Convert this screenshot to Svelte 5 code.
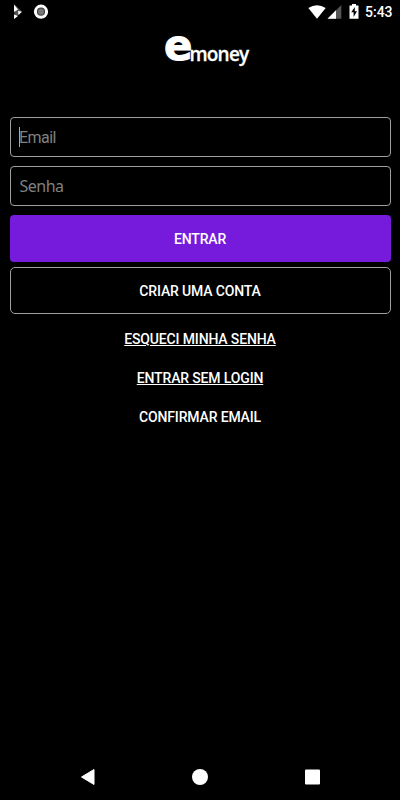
<script>
	let email = $state("");
	let senha = $state("");
	const links = [
		{ label: "ESQUECI MINHA SENHA", underline: true },
		{ label: "ENTRAR SEM LOGIN", underline: true },
		{ label: "CONFIRMAR EMAIL", underline: false }
	];
</script>

<div class="screen">
	<header class="status">
		<svg class="notify" width="36" height="16" viewBox="0 0 36 16">
			<path d="M1.5 0.5L8.8 7.6L1.5 14.8Z" fill="#555" />
			<path d="M1 0.5L5 5.5L1 8ZM5 7L9 7.7L5.5 11ZM1 10.5L5 12L1 15Z" fill="#fff" />
			<circle cx="28" cy="7.7" r="5.6" fill="#444" stroke="#fff" stroke-width="3" />
			<circle cx="28" cy="7.7" r="3" fill="#777" />
		</svg>
		<div class="system">
			<svg width="52" height="18" viewBox="0 0 52 18">
				<path d="M0.3 5.1Q9 -0.7 17.7 5.1L9 15.8Z" fill="#fff" />
				<path d="M19.5 15.8L33.3 2V15.8Z" fill="#555" />
				<path d="M19.5 15.8L28 7.2V15.8Z" fill="#fff" />
				<path d="M41.5 2.5H44V1H48V2.5H50.5V15.7H41.5Z" fill="#fff" />
				<path d="M46.8 4L43.2 9.3H45.6V14L49 8.2H46.8Z" fill="#000" />
			</svg>
			<span class="clock">5:43</span>
		</div>
	</header>

	<div class="logo">
		<svg width="88" height="36" viewBox="0 0 88 36">
			<text class="mark" x="-1" y="28">e</text>
			<text class="word" x="24.5" y="29">money</text>
		</svg>
	</div>

	<main>
		<div class="field">
			<span class="caret"></span>
			<input class="email" type="text" placeholder="Email" bind:value={email} />
		</div>
		<div class="field">
			<input class="senha" type="password" placeholder="Senha" bind:value={senha} />
		</div>
		<button class="primary">ENTRAR</button>
		<button class="outline">CRIAR UMA CONTA</button>
		<nav>
			{#each links as link}
				<button class="link"><span class:underline={link.underline}>{link.label}</span></button>
			{/each}
		</nav>
	</main>

	<footer>
		<svg width="16" height="18" viewBox="0 0 16 18">
			<path d="M14 1.5V16.5L1.5 9Z" fill="#fff" stroke="#fff" stroke-linejoin="round" />
		</svg>
		<svg width="16" height="18" viewBox="0 0 16 18">
			<circle cx="8" cy="9" r="8" fill="#fff" />
		</svg>
		<svg width="16" height="18" viewBox="0 0 16 18">
			<rect x="1" y="1.5" width="15" height="15" rx="1" fill="#fff" />
		</svg>
	</footer>
</div>

<style>
	:global(body) {
		margin: 0;
		background: #000;
	}
	.screen {
		height: 800px;
		display: flex;
		flex-direction: column;
		background: #000;
		color: #fff;
		font-family: Roboto, sans-serif;
	}
	svg {
		display: block;
	}
	.status {
		height: 24px;
		display: flex;
		justify-content: space-between;
		box-sizing: border-box;
		padding: 3px 8px 0 13px;
	}
	.notify {
		margin-top: 1px;
	}
	.system {
		display: flex;
		gap: 5px;
	}
	.clock {
		width: 27px;
		font-size: 14px;
		font-weight: 500;
		line-height: 19px;
		white-space: nowrap;
	}
	.logo {
		height: 93px;
		padding-left: 165px;
		box-sizing: border-box;
		padding-top: 8px;
	}
	.logo svg {
		overflow: visible;
	}
	.mark {
		font: bold 42px "DejaVu Sans", sans-serif;
		fill: #fff;
		stroke: #fff;
		stroke-width: 1px;
	}
	.word {
		font: 600 19px "Open Sans", sans-serif;
		letter-spacing: -0.8px;
		fill: #fff;
		stroke: #fff;
		stroke-width: 0.3px;
	}
	main {
		display: flex;
		flex-direction: column;
		padding: 0 9.5px;
	}
	.field {
		height: 40px;
		margin-bottom: 9px;
		display: flex;
		align-items: center;
		box-sizing: border-box;
		padding-left: 8.5px;
		border: 1px solid #a0a0a0;
		border-radius: 4px;
	}
	.caret {
		width: 1px;
		height: 20px;
		margin-left: -0.5px;
		margin-right: -0.5px;
		background: #aaa;
	}
	input {
		flex: 1;
		min-width: 0;
		padding: 0;
		border: 0;
		outline: none;
		background: none;
		color: #fff;
	}
	.email {
		font: 16px Roboto, sans-serif;
		letter-spacing: -0.55px;
	}
	.senha {
		margin-left: 0.5px;
		font: 16px "Noto Sans", sans-serif;
		letter-spacing: -0.5px;
	}
	input::placeholder {
		color: #808080;
		opacity: 1;
	}
	button {
		padding: 0;
		border: 0;
		background: none;
		color: #fff;
		font: 500 14px Roboto, sans-serif;
		letter-spacing: -0.15px;
	}
	.primary {
		height: 47px;
		border-radius: 4px;
		background: #761bdc;
	}
	.outline {
		height: 47px;
		margin-top: 5px;
		border: 1px solid #a0a0a0;
		border-radius: 5px;
	}
	nav {
		display: flex;
		flex-direction: column;
		margin-top: 5px;
	}
	.link {
		height: 39px;
	}
	.underline {
		text-decoration: underline;
	}
	footer {
		height: 47px;
		margin-top: auto;
		display: flex;
		align-items: center;
		justify-content: space-between;
		padding: 0 80px;
	}
</style>
